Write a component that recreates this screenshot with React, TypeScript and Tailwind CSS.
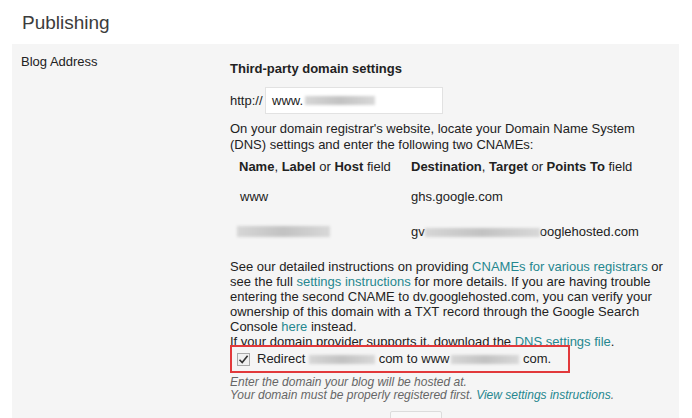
import React from "react";

const Blur = ({ w, className = "" }: { w: number; className?: string }) => (
  <span
    className={`inline-block h-[9px] align-[-1px] bg-gradient-to-r from-[#d6d6d6] via-[#c2c2c2] to-[#d8d8d8] blur-[1.5px] ${className}`}
    style={{ width: w }}
  />
);

const Link = ({ children }: { children: React.ReactNode }) => (
  <a className="text-[#26878f] cursor-pointer">{children}</a>
);

export default function App() {
  return (
    <div className="w-[692px] h-[418px] overflow-hidden bg-white text-[#222] font-['Liberation_Sans',Arial,sans-serif] text-[13px]">
      {/* Page title */}
      <h1 className="pl-[22px] pt-[10px] h-[44px] text-[19px] leading-[26px] text-[#3c3c3c] font-normal">
        Publishing
      </h1>

      {/* Settings panel */}
      <div className="mx-[12px] w-[667px] h-[374px] bg-[#f5f5f5] flex pl-[9px]">
        <div className="w-[209px] pt-[10px] leading-[16px]">Blog Address</div>

        <div className="flex-1 pt-[17px]">
          <div className="font-bold leading-[16px]">Third-party domain settings</div>

          <div className="flex items-center mt-[10px]">
            <span className="w-[35px]">http://</span>
            <div className="w-[178px] h-[27px] bg-white border border-[#e2e2e2] flex items-center pl-[6px]">
              www.<Blur w={70} className="ml-[2px]" />
            </div>
          </div>

          <p className="mt-[7px] leading-[16px] w-[420px]">
            On your domain registrar's website, locate your Domain Name System
            (DNS) settings and enter the following two CNAMEs:
          </p>

          <div className="mt-[2px]">
            <div className="flex h-[24px] items-center">
              <div className="w-[181px] pl-[9px]">
                <b>Name</b>, <b>Label</b> or <b>Host</b> field
              </div>
              <div>
                <b>Destination</b>, <b>Target</b> or <b>Points To</b> field
              </div>
            </div>
            <div className="flex h-[35px] items-center">
              <div className="w-[181px] pl-[10px]">www</div>
              <div>ghs.google.com</div>
            </div>
            <div className="flex h-[35px] items-center">
              <div className="w-[181px] pl-[7px]">
                <Blur w={93} className="h-[11px]" />
              </div>
              <div>
                gv<Blur w={115} />ooglehosted.com
              </div>
            </div>
          </div>

          <p className="mt-[10px] leading-[15px] w-[440px]">
            See our detailed instructions on providing{" "}
            <Link>CNAMEs for various registrars</Link> or see the full{" "}
            <Link>settings instructions</Link> for more details. If you are having
            trouble entering the second CNAME to dv.googlehosted.com, you can
            verify your ownership of this domain with a TXT record through the
            Google Search Console <Link>here</Link> instead.
            <br />
            If your domain provider supports it, download the{" "}
            <Link>DNS settings file</Link>.
          </p>

          {/* highlighted redirect option */}
          <div className="relative -mt-[4px] w-[340px] h-[28px] border-2 border-[#e2393b] bg-[#f5f5f5] flex items-center pl-[5px]">
            <span className="w-[13px] h-[13px] border border-[#a9a9a9] bg-[#f0f0f0] flex items-center justify-center">
              <svg width="11" height="11" viewBox="0 0 11 11">
                <path d="M1.5 5.8 L4.2 8.5 L9.6 1.8" fill="none" stroke="#333" strokeWidth="1.6" />
              </svg>
            </span>
            <span className="ml-[7px]">
              Redirect <Blur w={66} /> com to www<Blur w={68} className="ml-[2px]" /> com.
            </span>
          </div>

          <div className="mt-[3px] text-[12px] leading-[13px] italic text-[#666]">
            <div>Enter the domain your blog will be hosted at.</div>
            <div>
              Your domain must be properly registered first.{" "}
              <Link>View settings instructions</Link>.
            </div>
          </div>

          <div className="ml-[160px] mt-[9px] w-[52px] h-[24px] border border-[#dcdcdc] bg-[#f8f8f8] rounded-[2px]" />
        </div>
      </div>
    </div>
  );
}
